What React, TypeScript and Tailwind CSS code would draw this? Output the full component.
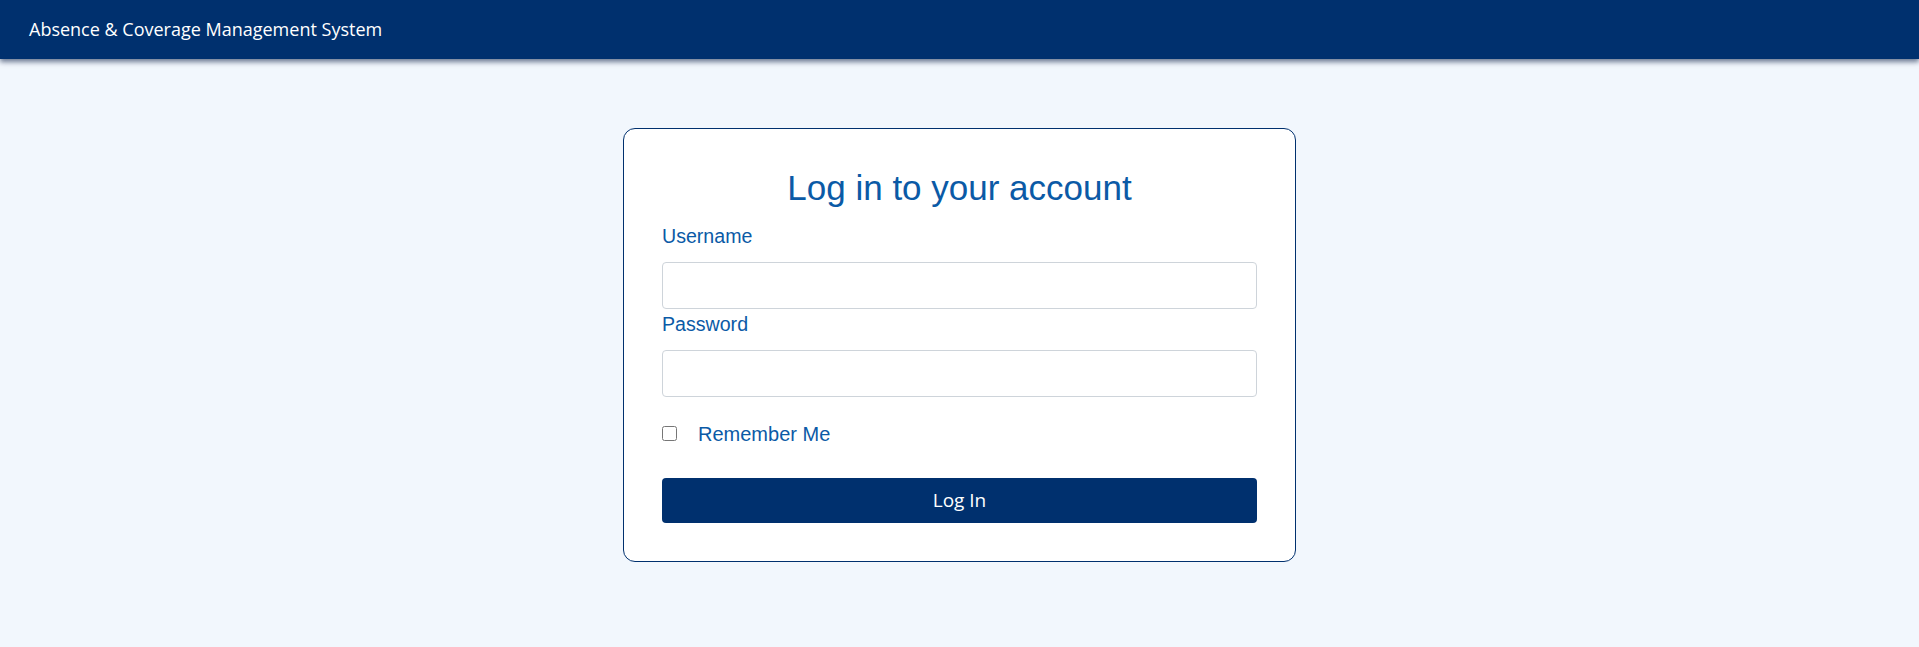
import { useState } from 'react';

export default function App() {
  const [username, setUsername] = useState('');
  const [password, setPassword] = useState('');
  const [remember, setRemember] = useState(false);

  return (
    <div className="min-h-[647px] bg-[#f2f7fd]">
      <header className="h-[59px] bg-[#00306e] flex items-center px-[29px] shadow-[0_3px_5px_rgba(0,20,60,0.55)] relative">
        <span className="text-white text-[18px] font-['Open_Sans',sans-serif]">
          Absence &amp; Coverage Management System
        </span>
      </header>

      <main className="flex justify-center pt-[69px]">
        <form
          className="w-[673px] bg-white border border-[#00306e] rounded-[12px] px-[38px] pt-[39px] pb-[38px] font-['Liberation_Sans',Arial,sans-serif]"
          onSubmit={(e) => e.preventDefault()}
        >
          <h1 className="text-center text-[35px] leading-[40px] text-[#0b5aa6] mb-[14px]">
            Log in to your account
          </h1>

          <label htmlFor="username" className="block text-[19.6px] leading-[29px] text-[#0b5aa6]">
            Username
          </label>
          <input
            id="username"
            className="block w-full h-[47px] mt-[11px] border border-[#ced4da] rounded-[4px] px-3 text-base outline-none"
            value={username}
            onChange={(e) => setUsername(e.target.value)}
          />

          <label htmlFor="password" className="block mt-[1px] text-[19.6px] leading-[29px] text-[#0b5aa6]">
            Password
          </label>
          <input
            id="password"
            type="password"
            className="block w-full h-[47px] mt-[11px] border border-[#ced4da] rounded-[4px] px-3 text-base outline-none"
            value={password}
            onChange={(e) => setPassword(e.target.value)}
          />

          <div className="flex items-center mt-[22px] h-[29px]">
            <input
              id="remember"
              type="checkbox"
              className="w-[15px] h-[15px] m-0"
              checked={remember}
              onChange={(e) => setRemember(e.target.checked)}
            />
            <label htmlFor="remember" className="ml-[21px] text-[20px] text-[#0b5aa6]">
              Remember Me
            </label>
          </div>

          <button
            type="submit"
            className="block w-full h-[45px] mt-[30px] bg-[#00306e] text-white rounded-[4px] text-[19px] font-['Open_Sans',sans-serif]"
          >
            Log In
          </button>
        </form>
      </main>
    </div>
  );
}
